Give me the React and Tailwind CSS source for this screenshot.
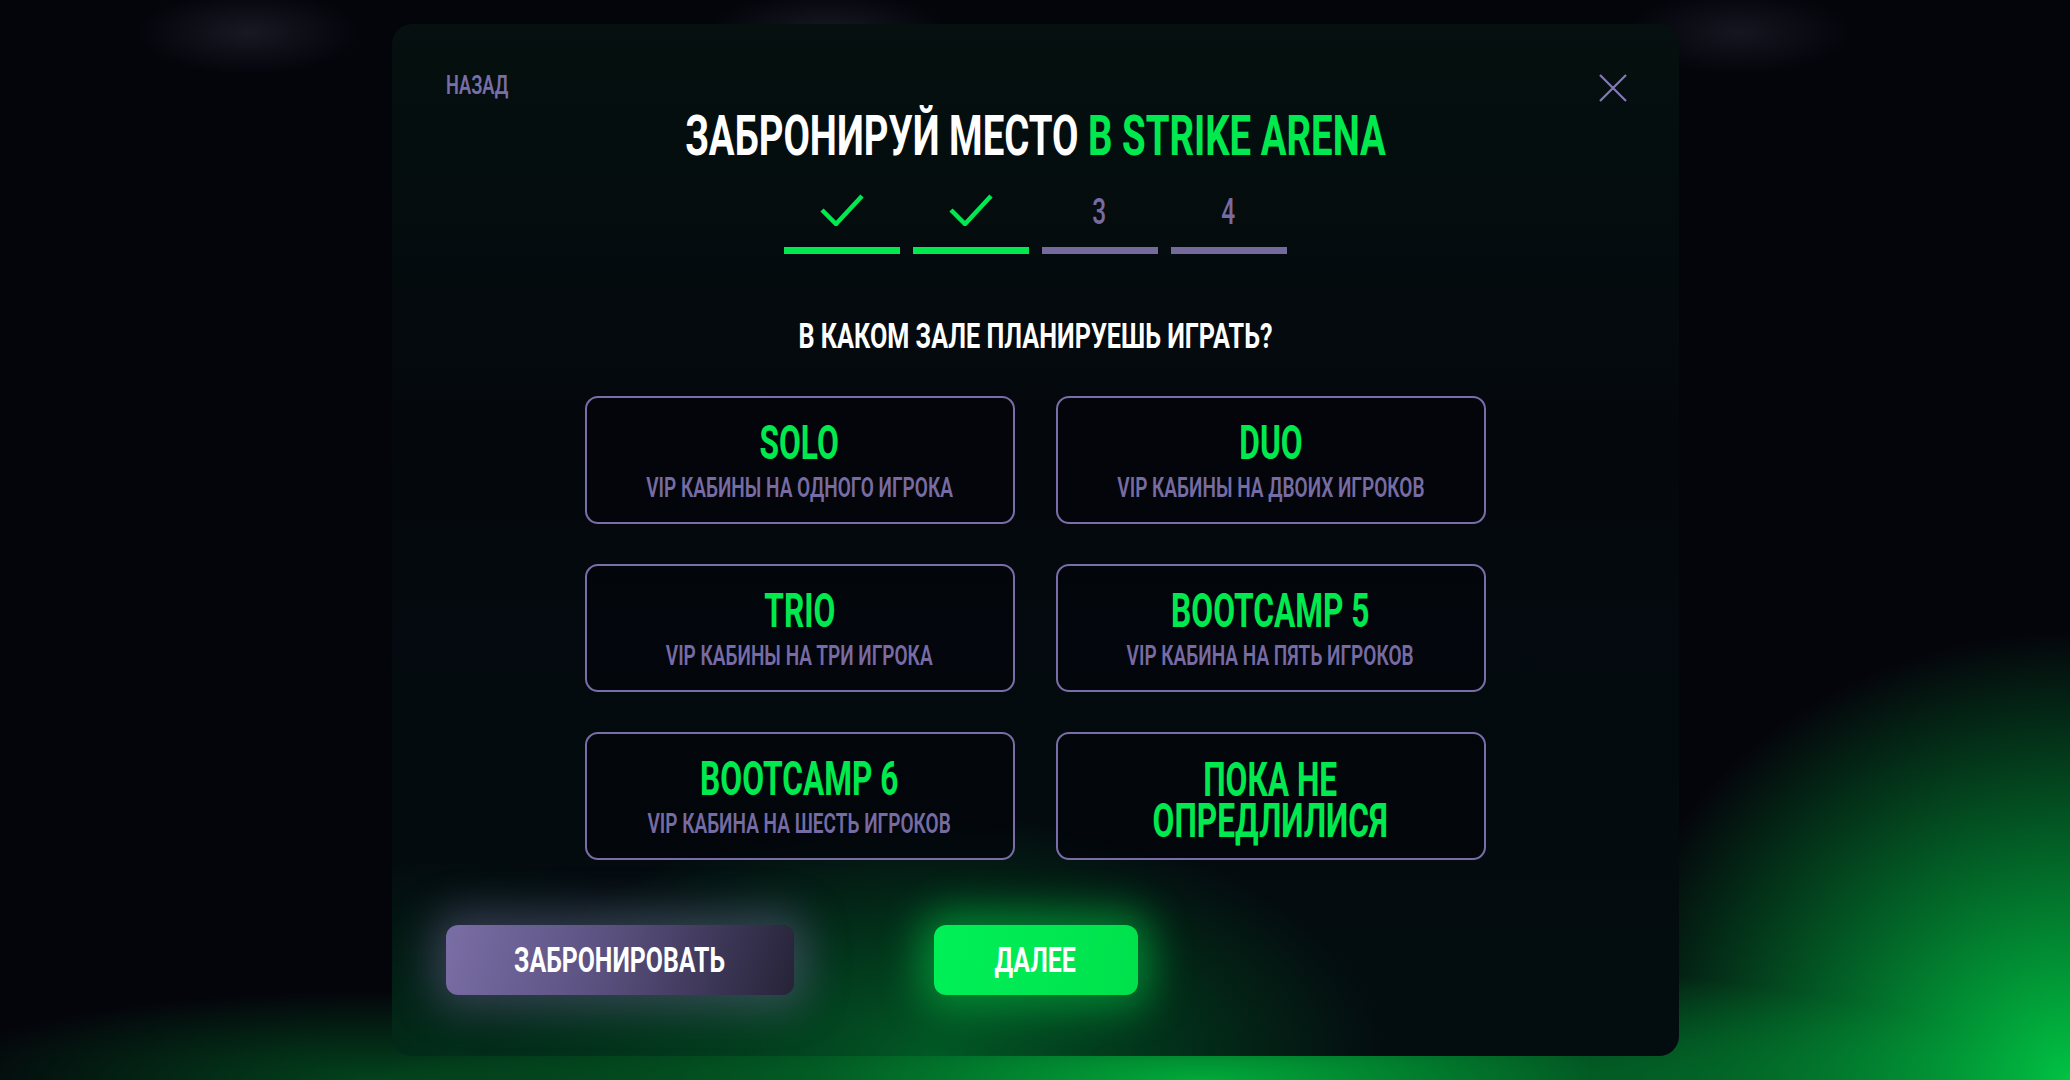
const font = { fontFamily: '"Roboto", "Liberation Sans", sans-serif' };

const halls = [
  { title: "SOLO", sub: "VIP КАБИНЫ НА ОДНОГО ИГРОКА" },
  { title: "DUO", sub: "VIP КАБИНЫ НА ДВОИХ ИГРОКОВ" },
  { title: "TRIO", sub: "VIP КАБИНЫ НА ТРИ ИГРОКА" },
  { title: "BOOTCAMP 5", sub: "VIP КАБИНА НА ПЯТЬ ИГРОКОВ" },
  { title: "BOOTCAMP 6", sub: "VIP КАБИНА НА ШЕСТЬ ИГРОКОВ" },
];

function Check() {
  return (
    <svg width="44" height="32" viewBox="0 0 44 32" fill="none">
      <path d="M2 16 L16 30 L42 2" stroke="#00e94f" strokeWidth="4.5" />
    </svg>
  );
}

function Step({ done, n }) {
  return (
    <div className="flex flex-col items-center gap-[22px]">
      <div className="h-[31px] flex justify-center">
        {done ? (
          <Check />
        ) : (
          <span className="mt-[3px] leading-[31px] text-[36px] font-medium text-[#776ba3] scale-x-[0.68]">
            {n}
          </span>
        )}
      </div>
      <div className={"w-[116px] h-[7px] " + (done ? "bg-[#00e94f]" : "bg-[#746a9c]")} />
    </div>
  );
}

function HallCard({ title, sub, lines }) {
  return (
    <button className="h-[128px] rounded-[13px] border-2 border-[#7a6ea8] bg-[#03040a]/70 flex flex-col items-center justify-center gap-[7px] overflow-visible">
      {lines ? (
        <span className="mt-[8px] whitespace-nowrap text-[48px] leading-[41px] font-bold text-[#00e94f] scale-x-[0.66] text-center">
          {lines[0]}
          <br />
          {lines[1]}
        </span>
      ) : (
        <>
          <span className="whitespace-nowrap text-[48px] leading-none font-bold text-[#00e94f] scale-x-[0.66]">
            {title}
          </span>
          <span className="whitespace-nowrap text-[28px] leading-none font-semibold text-[#776ba3] scale-x-[0.68]">
            {sub}
          </span>
        </>
      )}
    </button>
  );
}

export default function App() {
  return (
    <div
      style={font}
      className="w-full h-[1080px] overflow-hidden pt-[24px] bg-[#04040b] bg-[radial-gradient(ellipse_640px_600px_at_100%_100%,rgba(0,205,70,0.95),transparent_75%),radial-gradient(ellipse_1100px_170px_at_58%_100%,rgba(0,170,58,1),transparent_75%),radial-gradient(ellipse_600px_120px_at_18%_100%,rgba(0,110,40,0.6),transparent_75%),radial-gradient(ellipse_160px_60px_at_12%_3%,rgba(60,62,80,0.35),transparent_70%),radial-gradient(ellipse_170px_60px_at_40%_3%,rgba(60,62,80,0.35),transparent_70%),radial-gradient(ellipse_160px_60px_at_84%_3%,rgba(60,62,80,0.3),transparent_70%)]"
    >
      <div className="mx-auto w-[1287px] h-[1032px] rounded-[20px] overflow-hidden flex flex-col px-[54px] pt-[48px] bg-[#040a0f] bg-[radial-gradient(ellipse_600px_320px_at_42%_100%,rgba(0,150,55,0.55),transparent_75%),radial-gradient(ellipse_500px_260px_at_5%_100%,rgba(0,110,45,0.35),transparent_75%),linear-gradient(180deg,#05100f_0%,#04080d_40%,#030d10_100%)]">
        <div className="h-[36px] flex justify-between items-start">
          <span className="text-[26px] leading-none font-semibold text-[#7a6ea8] scale-x-[0.7] origin-left">
            НАЗАД
          </span>
          <svg className="mt-[2px] -mr-[2px]" width="28" height="28" viewBox="0 0 28 28" fill="none">
            <path d="M1 1 L27 27 M27 1 L1 27" stroke="#857ab8" strokeWidth="2.2" />
          </svg>
        </div>

        <h1 className="text-center whitespace-nowrap text-[56px] leading-none font-bold text-white scale-x-[0.685]">
          ЗАБРОНИРУЙ МЕСТО <span className="text-[#00ea50]">В STRIKE ARENA</span>
        </h1>

        <div className="mt-[30px] flex justify-center gap-[13px]">
          <Step done />
          <Step done />
          <Step n="3" />
          <Step n="4" />
        </div>

        <h2 className="mt-[65px] text-center whitespace-nowrap text-[35px] leading-none font-bold text-white scale-x-[0.72]">
          В КАКОМ ЗАЛЕ ПЛАНИРУЕШЬ ИГРАТЬ?
        </h2>

        <div className="mt-[42px] mx-auto w-[901px] grid grid-cols-2 gap-x-[41px] gap-y-[40px]">
          {halls.map((h) => (
            <HallCard key={h.title} title={h.title} sub={h.sub} />
          ))}
          <HallCard lines={["ПОКА НЕ", "ОПРЕДЛИЛИСЯ"]} />
        </div>

        <div className="mt-[65px] flex gap-[140px]">
          <button className="w-[348px] h-[70px] rounded-[12px] flex items-center justify-center bg-[linear-gradient(105deg,#7a6ea6_0%,#5b5180_45%,#262338_100%)] shadow-[0_0_40px_14px_rgba(122,110,168,0.4)]">
            <span className="text-[35px] leading-none font-bold text-white scale-x-[0.71]">ЗАБРОНИРОВАТЬ</span>
          </button>
          <button className="w-[204px] h-[70px] rounded-[12px] flex items-center justify-center bg-[linear-gradient(100deg,#00f058_0%,#00e14c_100%)] shadow-[0_0_40px_14px_rgba(0,230,80,0.45)]">
            <span className="text-[35px] leading-none font-bold text-white scale-x-[0.71]">ДАЛЕЕ</span>
          </button>
        </div>
      </div>
    </div>
  );
}
